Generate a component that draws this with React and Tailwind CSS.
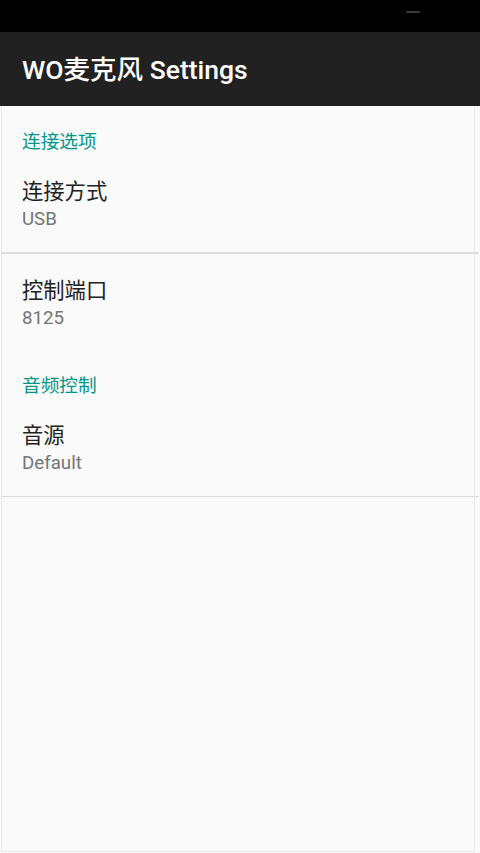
export default function App() {
  const font = { fontFamily: 'Roboto, "Noto Sans CJK SC", sans-serif' };

  return (
    <div className="w-[480px] h-[853px] flex flex-col bg-[#fafafa] overflow-hidden" style={font}>
      {/* status bar */}
      <div className="h-[32px] bg-black flex items-start justify-end pt-[11px] pr-[60px]">
        <div className="w-[14px] h-[2px] rounded-full bg-[#3a3a3a]"></div>
      </div>

      {/* toolbar */}
      <div className="h-[74px] bg-[#212121] flex items-center px-[22px]">
        <h1 className="mt-[2px] text-[26.5px] font-medium text-white leading-none">WO麦克风 Settings</h1>
      </div>

      <div className="flex-1 flex flex-col ml-[1px] mr-[5px] mb-[1px] border-x border-b border-[#ebebeb]">
        {/* 连接选项 */}
        <div className="pt-[25px] px-[20px] text-[18.7px] leading-[22px] text-[#009688]">连接选项</div>
        <div className="pt-[26px] pb-[22px] px-[20px]">
          <div className="text-[21.3px] leading-[26px] text-[#212121]">连接方式</div>
          <div className="mt-[3px] text-[18.7px] leading-[22px] text-[#757575]">USB</div>
        </div>
        <div className="h-[1.5px] bg-[#dcdcdc] -ml-[1px] -mr-[5px]"></div>
        <div className="pt-[24px] px-[20px]">
          <div className="text-[21.3px] leading-[26px] text-[#212121]">控制端口</div>
          <div className="mt-[3px] text-[18.7px] leading-[22px] text-[#757575]">8125</div>
        </div>

        {/* 音频控制 */}
        <div className="pt-[46px] px-[20px] text-[18.7px] leading-[22px] text-[#009688]">音频控制</div>
        <div className="pt-[26px] pb-[22px] px-[20px]">
          <div className="text-[21.3px] leading-[26px] text-[#212121]">音源</div>
          <div className="mt-[3px] text-[18.7px] leading-[22px] text-[#757575]">Default</div>
        </div>
        <div className="h-[1.5px] bg-[#dcdcdc] -ml-[1px] -mr-[5px]"></div>
      </div>
    </div>
  );
}
